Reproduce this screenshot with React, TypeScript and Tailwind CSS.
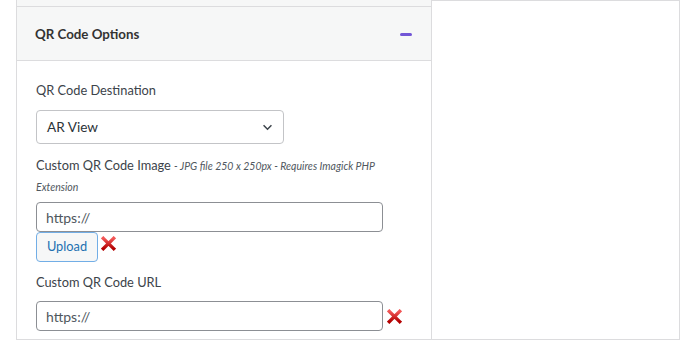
function RedX({ className }: { className?: string }) {
  return (
    <svg viewBox="0 0 16 16" className={className} aria-hidden="true">
      <defs>
        <linearGradient id="rx" x1="0" y1="0" x2="0" y2="1">
          <stop offset="0" stopColor="#f25757" />
          <stop offset="1" stopColor="#b30000" />
        </linearGradient>
      </defs>
      <path d="M2.5 2.5 L13.5 13.5 M13.5 2.5 L2.5 13.5" stroke="url(#rx)" strokeWidth="3.6" strokeLinecap="square" fill="none" />
    </svg>
  );
}

function Field({ children }: { children: React.ReactNode }) {
  return <div className="w-[347px] h-[30px] rounded border border-[#8c8f94] bg-white px-[9px] flex items-center text-[14px] text-[#50575e]">{children}</div>;
}

export default function App() {
  return (
    <div className="w-[680px] h-[340px] bg-white flex pl-4 font-['Lato',sans-serif] text-[#3c434a]">
      <div className="w-[416px] h-[340px] border-x border-b border-[#dcdcde] flex flex-col">
        <div className="h-[7px] bg-[#f6f7f7] border-b border-[#dcdcde]" />
        <div className="h-[54px] bg-[#f6f7f7] border-b border-[#dcdcde] flex items-center justify-between pt-[2px] pl-[18px] pr-[19px]">
          <span className="text-[13.3px] font-bold text-[#333]">QR Code Options</span>
          <span className="w-3 h-[3px] bg-[#7256d6] rounded-sm" />
        </div>
        <div className="pl-[19px] pt-[19px] flex flex-col">
          <div className="text-[12.8px] leading-[20px]">QR Code Destination</div>
          <div className="mt-[10px] w-[248px] h-[34px] rounded border border-[#c3c4c7] bg-white pl-[10px] pr-[10px] flex items-center justify-between text-[13.6px] text-[#2c3338]">
            <span>AR View</span>
            <svg viewBox="0 0 12 8" className="w-[11px] h-[7px]" aria-hidden="true">
              <path d="M1.5 1.5 L6 6 L10.5 1.5" stroke="#3c434a" strokeWidth="1.7" fill="none" />
            </svg>
          </div>
          <div className="mt-[11px] w-[340px] text-[12.8px] leading-[20px]">
            Custom QR Code Image <span className="italic text-[10.5px] text-[#50575e]">- JPG file 250 x 250px - Requires Imagick PHP Extension</span>
          </div>
          <div className="mt-[5px] flex">
            <Field>https://</Field>
          </div>
          <div className="flex items-start">
            <button className="w-[62px] h-[30px] rounded border border-[#72aee6] bg-[#f6f7f7] text-[#2271b1] text-[12.8px]">Upload</button>
            <RedX className="w-[15px] h-[15px] ml-[3px] mt-[4px]" />
          </div>
          <div className="mt-[10px] text-[12.8px] leading-[20px]">Custom QR Code URL</div>
          <div className="mt-[9px] flex items-center">
            <Field>https://</Field>
            <RedX className="w-[15px] h-[15px] ml-[4px]" />
          </div>
        </div>
      </div>
      <div className="w-[248px] h-[340px] border-y border-r border-[#dcdcde]" />
    </div>
  );
}
